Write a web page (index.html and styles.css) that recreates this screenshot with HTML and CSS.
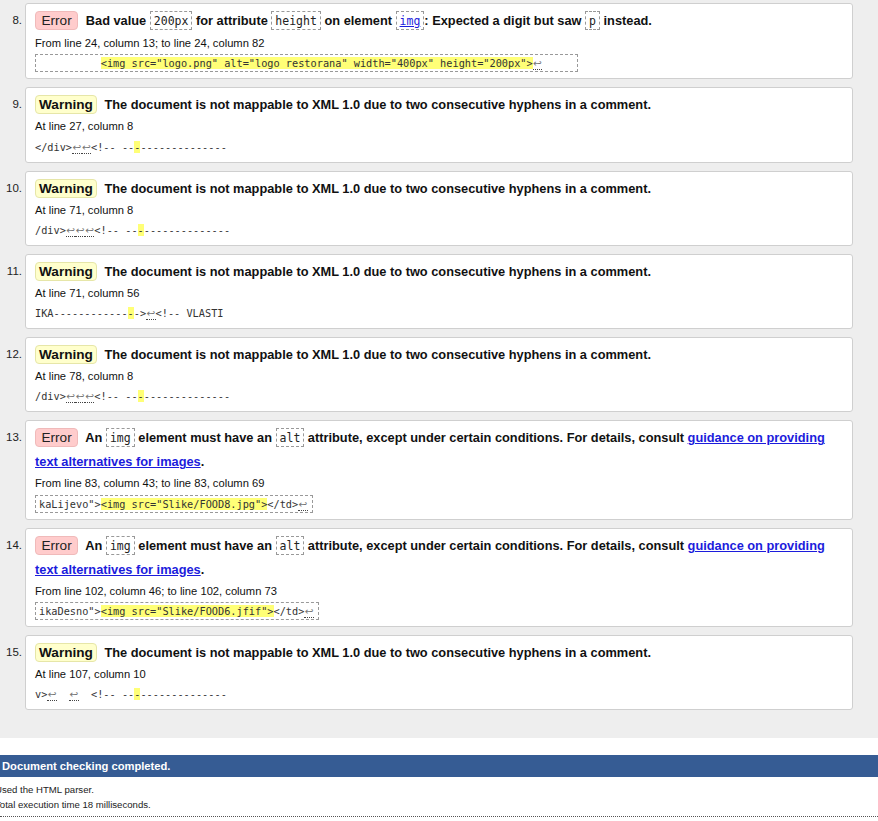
FILE: index.html
```html
<!DOCTYPE html>
<html lang="en">
<head>
<meta charset="utf-8">
<title>Validation results</title>
<link rel="stylesheet" href="styles.css">
</head>
<body>
<div class="results">
  <ol class="messages">
    <li class="item">
      <span class="num">8.</span>
      <div class="card">
        <p class="message"><strong class="badge badge-error">Error</strong> Bad value <code class="ic">200px</code> for attribute <code class="ic">height</code> on element <code class="ic"><a href="#img">img</a></code>: Expected a digit but saw <code class="ic">p</code> instead.</p>
        <p class="location">From line 24, column 13; to line 24, column 82</p>
        <code class="extract boxed">          <mark>&lt;img src="logo.png" alt="logo restorana" width="400px" height="200px"&gt;</mark><span class="lf">↩</span>     </code>
      </div>
    </li>
    <li class="item">
      <span class="num">9.</span>
      <div class="card">
        <p class="message"><strong class="badge badge-warning">Warning</strong> The document is not mappable to XML 1.0 due to two consecutive hyphens in a comment.</p>
        <p class="location">At line 27, column 8</p>
        <code class="extract">&lt;/div&gt;<span class="lf">↩</span><span class="lf">↩</span>&lt;!-- --<mark>-</mark>--------------</code>
      </div>
    </li>
    <li class="item">
      <span class="num">10.</span>
      <div class="card">
        <p class="message"><strong class="badge badge-warning">Warning</strong> The document is not mappable to XML 1.0 due to two consecutive hyphens in a comment.</p>
        <p class="location">At line 71, column 8</p>
        <code class="extract">/div&gt;<span class="lf">↩</span><span class="lf">↩</span><span class="lf">↩</span>&lt;!-- --<mark>-</mark>--------------</code>
      </div>
    </li>
    <li class="item">
      <span class="num">11.</span>
      <div class="card">
        <p class="message"><strong class="badge badge-warning">Warning</strong> The document is not mappable to XML 1.0 due to two consecutive hyphens in a comment.</p>
        <p class="location">At line 71, column 56</p>
        <code class="extract">IKA------------<mark>-</mark>-&gt;<span class="lf">↩</span>&lt;!-- VLASTI</code>
      </div>
    </li>
    <li class="item">
      <span class="num">12.</span>
      <div class="card">
        <p class="message"><strong class="badge badge-warning">Warning</strong> The document is not mappable to XML 1.0 due to two consecutive hyphens in a comment.</p>
        <p class="location">At line 78, column 8</p>
        <code class="extract">/div&gt;<span class="lf">↩</span><span class="lf">↩</span><span class="lf">↩</span>&lt;!-- --<mark>-</mark>--------------</code>
      </div>
    </li>
    <li class="item">
      <span class="num">13.</span>
      <div class="card">
        <p class="message"><strong class="badge badge-error">Error</strong> An <code class="ic">img</code> element must have an <code class="ic">alt</code> attribute, except under certain conditions. For details, consult <a href="#guidance">guidance on providing text alternatives for images</a>.</p>
        <p class="location">From line 83, column 43; to line 83, column 69</p>
        <code class="extract boxed">kaLijevo"&gt;<mark>&lt;img src="Slike/FOOD8.jpg"&gt;</mark>&lt;/td&gt;<span class="lf">↩</span></code>
      </div>
    </li>
    <li class="item">
      <span class="num">14.</span>
      <div class="card">
        <p class="message"><strong class="badge badge-error">Error</strong> An <code class="ic">img</code> element must have an <code class="ic">alt</code> attribute, except under certain conditions. For details, consult <a href="#guidance">guidance on providing text alternatives for images</a>.</p>
        <p class="location">From line 102, column 46; to line 102, column 73</p>
        <code class="extract boxed">ikaDesno"&gt;<mark>&lt;img src="Slike/FOOD6.jfif"&gt;</mark>&lt;/td&gt;<span class="lf">↩</span></code>
      </div>
    </li>
    <li class="item">
      <span class="num">15.</span>
      <div class="card">
        <p class="message"><strong class="badge badge-warning">Warning</strong> The document is not mappable to XML 1.0 due to two consecutive hyphens in a comment.</p>
        <p class="location">At line 107, column 10</p>
        <code class="extract">v&gt;<span class="lf">↩</span>  <span class="lf">↩</span>  &lt;!-- --<mark>-</mark>--------------</code>
      </div>
    </li>
  </ol>
</div>
<div class="footer">
  <p class="completed">Document checking completed.</p>
  <p class="stats">Used the HTML parser.</p>
  <p class="stats">Total execution time 18 milliseconds.</p>
</div>
</body>
</html>
```

FILE: styles.css
```css
html, body {
  margin: 0;
  padding: 0;
  background: #fff;
  font-family: "Liberation Sans", Arial, sans-serif;
  color: #000;
}

.results {
  background: #eeeeee;
  padding: 3px 0 28px;
}

.messages {
  list-style: none;
  margin: 0;
  padding: 0;
  display: flex;
  flex-direction: column;
  gap: 8px;
}

.item {
  display: flex;
  align-items: flex-start;
}

.num {
  width: 22px;
  flex: 0 0 22px;
  text-align: right;
  padding-top: 6px;
  line-height: 23px;
  font-size: 11.5px;
  color: #222;
}

.card {
  flex: 0 0 809px;
  margin-left: 3px;
  background: #fff;
  border: 1px solid #cfcfcf;
  border-radius: 3px;
  padding: 5px 8px 6px 9px;
}

.message {
  margin: 0;
  font-size: 12.8px;
  font-weight: bold;
  line-height: 23px;
  color: #111;
}

.badge {
  display: inline-block;
  line-height: 16px;
  border-radius: 4px;
  margin-right: 4px;
  font-size: 13.6px;
}

.badge-error {
  background: #ffcccc;
  border: 1px solid #f0baba;
  font-weight: normal;
  padding: 1px 5.5px 0;
  color: #222;
}

.badge-warning {
  background: #ffffcc;
  border: 1px solid #e6e6a8;
  font-weight: bold;
  padding: 1px 3px 0;
  color: #111;
}

.ic {
  font-family: "DejaVu Sans Mono", "Liberation Mono", monospace;
  font-size: 11.5px;
  font-weight: normal;
  color: #222;
  border: 1px dashed #999;
  padding: 2px 3px 1px;
}

a {
  color: #1c1cdc;
  text-decoration: underline;
}

.location {
  margin: 0;
  font-size: 11.2px;
  line-height: 20px;
  color: #111;
}

.extract {
  display: inline-block;
  vertical-align: top;
  margin-top: 1.3px;
  font-family: "DejaVu Sans Mono", "Liberation Mono", monospace;
  font-size: 10.25px;
  line-height: 18px;
  white-space: pre;
  color: #333;
}

.extract.boxed {
  line-height: 16px;
  border: 1px dashed #999;
  padding: 0 4px 0 3px;
}

mark {
  background: #ffff77;
  color: #333;
}

.lf {
  display: inline-block;
  width: 9.5px;
  text-align: center;
  font-family: "DejaVu Sans", sans-serif;
  font-size: 10.5px;
  color: #777;
  line-height: 12px;
  border-bottom: 1px dotted #444;
}

.footer {
  margin-top: 17px;
  border-bottom: 1px dotted #555;
  padding-bottom: 4px;
}

.completed {
  margin: 0;
  background: #365c94;
  color: #fff;
  font-weight: bold;
  font-size: 11.2px;
  line-height: 22px;
  height: 22px;
  padding-left: 2px;
}

.stats {
  margin: 0 0 0 -5px;
  font-size: 9.6px;
  line-height: 15px;
  color: #222;
}

.completed + .stats {
  margin-top: 5px;
}
```
